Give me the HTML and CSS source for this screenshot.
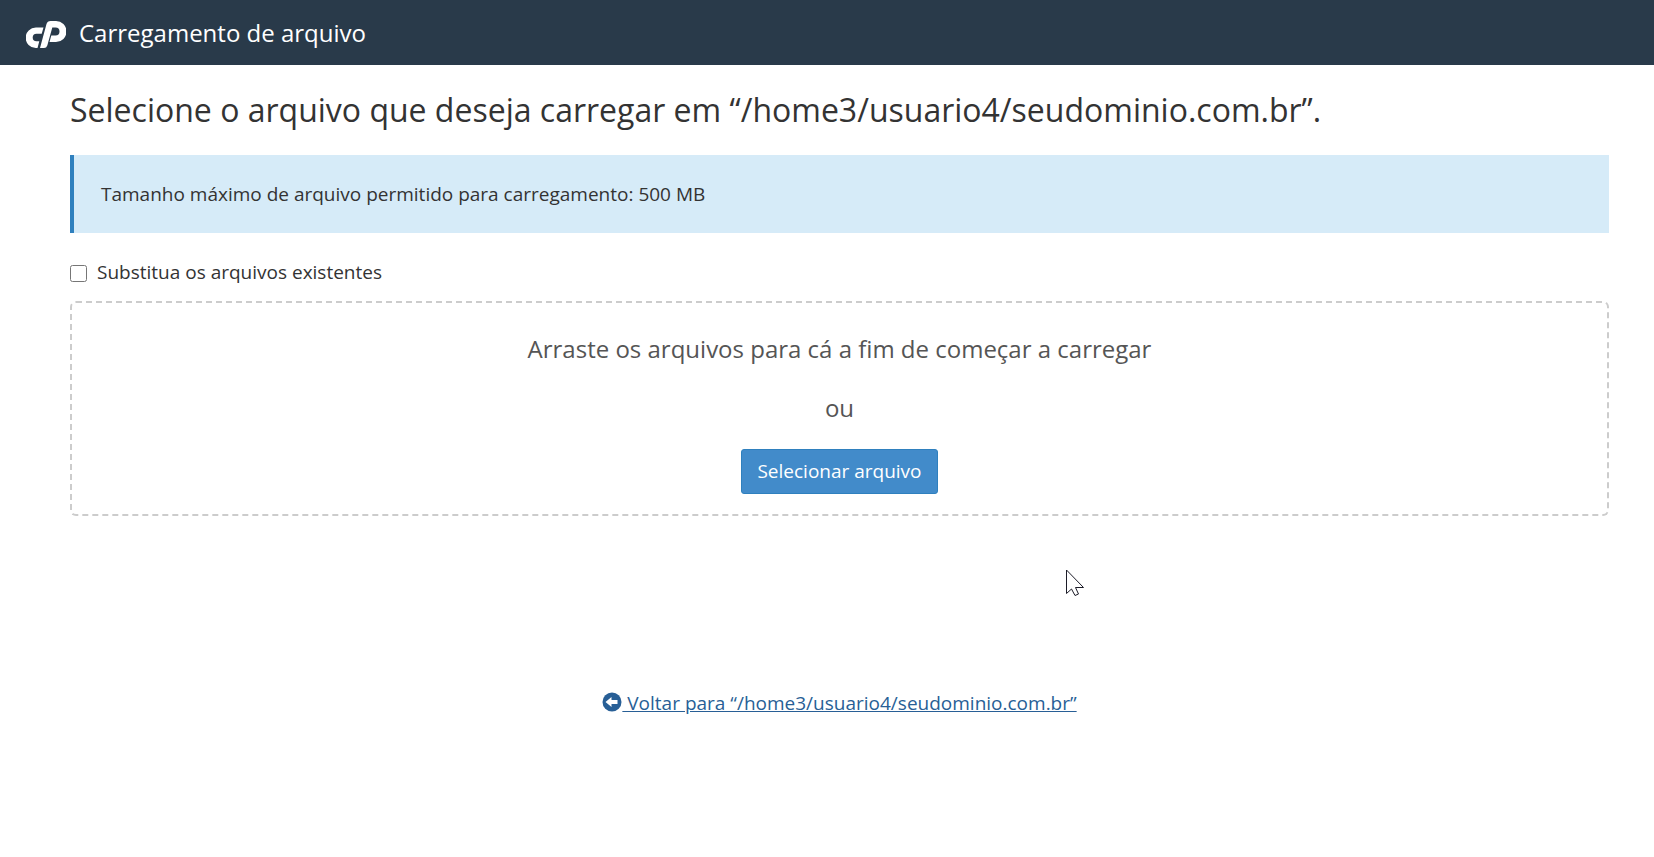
FILE: index.html
```html
<!DOCTYPE html>
<html lang="pt-br">
<head>
    <meta charset="UTF-8">
    <meta name="viewport" content="width=device-width, initial-scale=1.0">
    <title>Carregamento de arquivo</title>
    <link rel="stylesheet" href="styles.css">
</head>
<body>

<header class="navbar">
    <svg class="logo" viewBox="0 0 40 27" aria-hidden="true">
        <path fill="#fff" d="M10 6.500H17.500L15.700 12.700H10.500A3.800 3.800 0 0 0 10.500 20.300H13.300L11.500 27H9.800A9.800 9.800 0 0 1 10 6.500Z"/>
        <path fill="#fff" d="M14 27L20.500 3Q21.400 0 24.500 0H30A10 10 0 0 1 30 21H23.500L25.300 14.500H29.500A4 4 0 0 0 29.500 6.500H26.300L21.300 24.500Q20.500 27 18 27Z"/>
    </svg>
    <span class="navbar-title">Carregamento de arquivo</span>
</header>

<main class="content">
    <h1>Selecione o arquivo que deseja carregar em “/home3/usuario4/seudominio.com.br”.</h1>

    <div class="callout">Tamanho máximo de arquivo permitido para carregamento: 500 MB</div>

    <div class="overwrite">
        <input type="checkbox" id="overwrite" name="overwrite">
        <label for="overwrite">Substitua os arquivos existentes</label>
    </div>

    <!-- Área de arrastar e soltar -->
    <div class="dropzone">
        <p>Arraste os arquivos para cá a fim de começar a carregar</p>
        <p>ou</p>
        <button type="button" class="btn-primary">Selecionar arquivo</button>
    </div>

    <div class="return-link">
        <a href="#"><svg class="return-icon" viewBox="0 0 20 20" aria-hidden="true">
            <circle cx="10" cy="10" r="9.500" fill="#285f96"/>
            <path fill="#fff" d="M3.500 10L9.500 5V8H15.500V12H9.500V15Z"/>
        </svg> Voltar para “/home3/usuario4/seudominio.com.br”</a>
    </div>
</main>

<svg class="cursor" viewBox="0 0 20 28" aria-hidden="true">
    <path fill="#fff" stroke="#1c1c28" d="M1.500 1V24.500L6.500 20L10 26.500L13.500 25L10.500 18.500H18.500Z"/>
</svg>

</body>
</html>
```

FILE: styles.css
```css
body {
    margin: 0;
    font-family: "Open Sans", sans-serif;
    font-size: 19px;
    line-height: 28px;
    color: #333;
    background-color: #fff;
}

.navbar {
    display: flex;
    align-items: flex-end;
    gap: 13px;
    padding: 17px 26px;
    background-color: #293a4a;
    color: #fff;
}

.logo {
    width: 40px;
    height: 27px;
}

.navbar-title {
    font-size: 24px;
    line-height: 31px;
}

.content {
    padding: 20px 45px 20px 70px;
}

h1 {
    margin: 0 0 20px;
    font-size: 32px;
    line-height: 50px;
    font-weight: 400;
}

.callout {
    padding: 25px 27px;
    background-color: #d6ebf8;
    border-left: 4px solid #2f80be;
}

.overwrite {
    display: flex;
    align-items: center;
    gap: 10px;
    margin: 25px 0 15px;
}

.overwrite input {
    width: 17px;
    height: 17px;
    margin: 2px 0 0;
}

/* Área de upload */
.dropzone {
    padding: 28px 20px 20px;
    border: 2px dashed #ccc;
    border-radius: 6px;
    text-align: center;
}

.dropzone p {
    margin: 0 0 24px;
    font-size: 24px;
    line-height: 35px;
    color: #555;
}

.btn-primary {
    padding: 8px 15px;
    font-family: inherit;
    font-size: 19px;
    line-height: 27px;
    color: #fff;
    background-color: #428bca;
    border: 1px solid #2f80be;
    border-radius: 3px;
    cursor: pointer;
}

.btn-primary:hover {
    background-color: #3071a9;
}

.return-link {
    margin-top: 173px;
    text-align: center;
}

.return-link a {
    color: #285f96;
}

.return-icon {
    width: 20px;
    height: 20px;
    vertical-align: -2px;
}

.cursor {
    position: absolute;
    top: 569px;
    left: 1065px;
    width: 20px;
    height: 28px;
}
```
